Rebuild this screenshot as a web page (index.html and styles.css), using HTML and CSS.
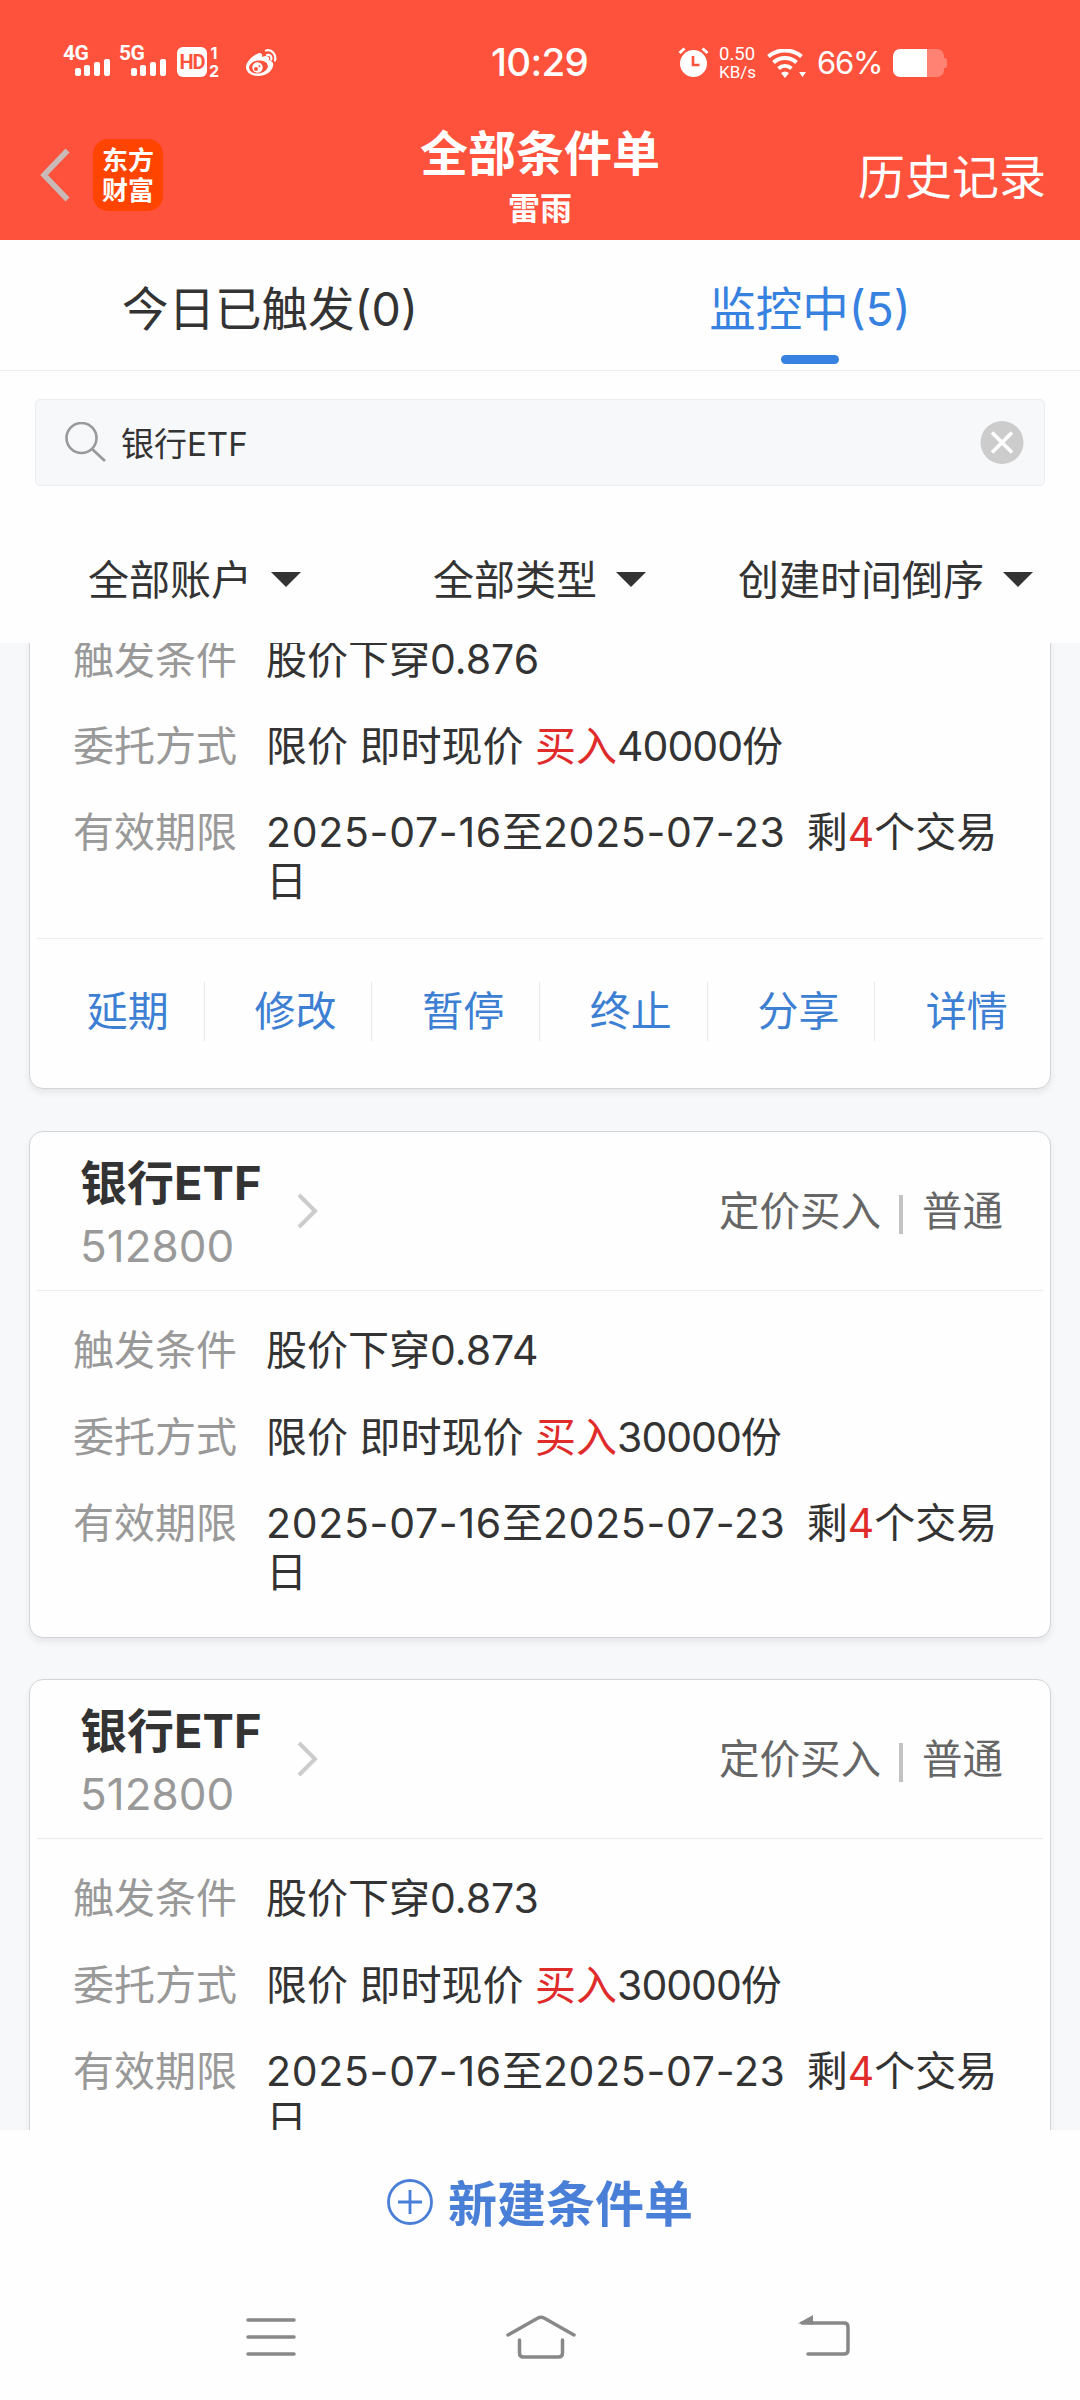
FILE: index.html
```html
<!DOCTYPE html>
<html lang="zh-CN">
<head>
    <meta charset="UTF-8">
    <meta name="viewport" content="width=device-width, initial-scale=1.0">
    <title>全部条件单</title>
    <link rel="stylesheet" href="styles.css">
</head>
<body>

<div class="page">
    <header class="header">
        <div class="status">
            <svg class="signal" width="48" height="42" viewBox="0 -8 48 42" fill="#fff">
                <text x="0" y="18" class="signal-text">4G</text>
                <rect x="12" y="26" width="6" height="8" rx="2"/>
                <rect x="21" y="23" width="6" height="11" rx="2"/>
                <rect x="31" y="20" width="6" height="14" rx="2"/>
                <rect x="41" y="17" width="6" height="17" rx="2"/>
            </svg>
            <svg class="signal" width="48" height="42" viewBox="0 -8 48 42" fill="#fff">
                <text x="0" y="18" class="signal-text">5G</text>
                <rect x="12" y="26" width="6" height="8" rx="2"/>
                <rect x="21" y="23" width="6" height="11" rx="2"/>
                <rect x="31" y="20" width="6" height="14" rx="2"/>
                <rect x="41" y="17" width="6" height="17" rx="2"/>
            </svg>
            <span class="hd">HD</span>
            <span class="sim"><span>1</span><span>2</span></span>
            <svg class="weibo" width="32" height="28" viewBox="0 0 32 28">
                <path d="M11 5c3-2 6-1 5 3 4-2 8-1 7 3 3 1 5 3 4 6-1 6-8 10-15 10C5 27 0 23 0 18 0 13 6 7 11 5z" fill="#fff"/>
                <ellipse cx="12.500" cy="18" rx="9.500" ry="6.500" fill="#ff523c" transform="rotate(-8 12.500 18)"/>
                <circle cx="11.500" cy="18.500" r="5.200" fill="#fff"/>
                <circle cx="10" cy="20" r="2" fill="#ff523c"/>
                <circle cx="13.500" cy="17.300" r="1" fill="#ff523c"/>
                <path d="M20 1.500c6-1.500 10.500 4 9 10M21 6c3-.8 5 1.500 4.200 4.500" fill="none" stroke="#fff" stroke-width="2.200" stroke-linecap="round"/>
            </svg>
            <span class="time">10:29</span>
            <svg class="alarm" width="32" height="30" viewBox="0 0 32 30">
                <circle cx="15.500" cy="16.500" r="13.500" fill="#fff"/>
                <path d="M1.500 6l5-4.500M29.500 6l-5-4.500" stroke="#fff" stroke-width="3"/>
                <path d="M15 9v9h6.500" fill="none" stroke="#ff523c" stroke-width="2.600"/>
            </svg>
            <span class="speed"><span>0.50</span><span>KB/s</span></span>
            <svg class="wifi" width="40" height="29" viewBox="0 0 40 29">
                <path d="M1.500 7.500C11-.5 25-.5 34.500 7.500M6.500 13.500c6.500-6 16.500-6 23 0M11.500 19.500c4-3.500 9-3.500 13 0" fill="none" stroke="#fff" stroke-width="4"/>
                <path d="M14 24q4-3 8 0l-4 5zM32 23h7l-3.500 5z" fill="#fff"/>
            </svg>
            <span class="percent">66%</span>
            <svg class="battery" width="54" height="28" viewBox="0 0 54 28">
                <path d="M34 0h10a7 7 0 0 1 7 7v2q3 0 3 2v6q0 2-3 2v2a7 7 0 0 1-7 7H34z" fill="#ff8272"/>
                <path d="M34 0H7a7 7 0 0 0-7 7v14a7 7 0 0 0 7 7h27z" fill="#fff"/>
            </svg>
        </div>
        <div class="navbar">
            <div class="nav-left">
                <svg width="30" height="54" viewBox="0 0 30 54">
                    <path d="M27.500 2.500L4 27l23.500 24.500" fill="none" stroke="#c9b9b7" stroke-width="5.500"/>
                </svg>
                <div class="logo"><span>东方</span><span>财富</span></div>
            </div>
            <div class="nav-title">
                <h1>全部条件单</h1>
                <p>雷雨</p>
            </div>
            <a class="history">历史记录</a>
        </div>
    </header>

    <nav class="tabs">
        <div class="tab"><span>今日已触发(0)</span></div>
        <div class="tab active"><span>监控中(5)</span></div>
    </nav>

    <div class="search">
        <svg width="42" height="42" viewBox="0 0 42 42">
            <circle cx="16.500" cy="16" r="15" fill="none" stroke="#999" stroke-width="2.600"/>
            <path d="M27 27l13 12" stroke="#999" stroke-width="2.800"/>
        </svg>
        <span class="keyword">银行ETF</span>
        <svg width="44" height="44" viewBox="0 0 44 44">
            <circle cx="22" cy="21.500" r="21.500" fill="#ccc"/>
            <path d="M12 11.500l20 20M32 11.500l-20 20" stroke="#fff" stroke-width="3.600"/>
        </svg>
    </div>

    <div class="filters">
        <div class="filter"><span>全部账户</span><i class="arrow"></i></div>
        <div class="filter"><span>全部类型</span><i class="arrow"></i></div>
        <div class="filter"><span>创建时间倒序</span><i class="arrow"></i></div>
    </div>

    <main class="list">
        <div class="card first">
            <div class="card-head">
                <div class="stock">
                    <h2>银行ETF</h2>
                    <p>512800</p>
                </div>
                <svg class="chevron" width="22" height="36" viewBox="0 0 22 36"><path d="M2 2l16 16L2 34" fill="none" stroke="#ccc" stroke-width="4"/></svg>
                <div class="kind"><span>定价买入</span><i></i><span>普通</span></div>
            </div>
            <div class="card-body">
                <div class="row"><label>触发条件</label><p>股价下穿0.876</p></div>
                <div class="row"><label>委托方式</label><p>限价 即时现价 <em>买入</em><span class="amount">40000</span>份</p></div>
                <div class="row"><label>有效期限</label><p class="period"><span class="date">2025-07-16</span>至<span class="date">2025-07-23</span>&nbsp; 剩<em>4</em>个交易日</p></div>
            </div>
            <div class="actions">
                <a>延期</a>
                <a>修改</a>
                <a>暂停</a>
                <a>终止</a>
                <a>分享</a>
                <a>详情</a>
            </div>
        </div>

        <div class="card">
            <div class="card-head">
                <div class="stock">
                    <h2>银行ETF</h2>
                    <p>512800</p>
                </div>
                <svg class="chevron" width="22" height="36" viewBox="0 0 22 36"><path d="M2 2l16 16L2 34" fill="none" stroke="#ccc" stroke-width="4"/></svg>
                <div class="kind"><span>定价买入</span><i></i><span>普通</span></div>
            </div>
            <div class="card-body">
                <div class="row"><label>触发条件</label><p>股价下穿0.874</p></div>
                <div class="row"><label>委托方式</label><p>限价 即时现价 <em>买入</em><span class="amount">30000</span>份</p></div>
                <div class="row"><label>有效期限</label><p class="period"><span class="date">2025-07-16</span>至<span class="date">2025-07-23</span>&nbsp; 剩<em>4</em>个交易日</p></div>
            </div>
        </div>

        <div class="card">
            <div class="card-head">
                <div class="stock">
                    <h2>银行ETF</h2>
                    <p>512800</p>
                </div>
                <svg class="chevron" width="22" height="36" viewBox="0 0 22 36"><path d="M2 2l16 16L2 34" fill="none" stroke="#ccc" stroke-width="4"/></svg>
                <div class="kind"><span>定价买入</span><i></i><span>普通</span></div>
            </div>
            <div class="card-body">
                <div class="row"><label>触发条件</label><p>股价下穿0.873</p></div>
                <div class="row"><label>委托方式</label><p>限价 即时现价 <em>买入</em><span class="amount">30000</span>份</p></div>
                <div class="row"><label>有效期限</label><p class="period"><span class="date">2025-07-16</span>至<span class="date">2025-07-23</span>&nbsp; 剩<em>4</em>个交易日</p></div>
            </div>
        </div>
    </main>

    <div class="create">
        <svg width="46" height="46" viewBox="0 0 46 46" fill="none" stroke="#4a7fd8" stroke-width="2.800">
            <circle cx="23" cy="23" r="21.500"/>
            <path d="M23 11v24M11 23h24"/>
        </svg>
        <span>新建条件单</span>
    </div>

    <footer class="sysnav">
        <svg width="50" height="44" viewBox="0 0 50 44" stroke="#888" stroke-width="3.500" stroke-linecap="round">
            <path d="M2 5h46M2 22h46M2 39h46"/>
        </svg>
        <svg width="70" height="44" viewBox="0 0 70 44" fill="none" stroke="#888" stroke-width="3.500" stroke-linecap="round" stroke-linejoin="round">
            <path d="M2 20L32 3q3-1.500 6 0l30 17M13.500 25v13q0 4 4 4h35q4 0 4-4V25"/>
        </svg>
        <svg width="52" height="44" viewBox="0 0 52 44" fill="none" stroke="#888" stroke-width="3.500" stroke-linecap="round">
            <path d="M4 8h42q4 0 4 4v23q0 4-4 4H10"/>
            <path d="M0 8.500L15 0v9.500z" fill="#888" stroke="none"/>
        </svg>
    </footer>
</div>

</body>
</html>
```
FILE: styles.css
```css
* {
    box-sizing: border-box;
}
body {
    margin: 0;
    font-family: Inter, 'Noto Sans CJK SC', sans-serif;
    color: #333;
    background: #fff;
}
h1, h2, p {
    margin: 0;
}
svg {
    display: block;
    flex: none;
}
em {
    font-style: normal;
    color: #e02b2b;
}
.page {
    width: 1080px;
    height: 2400px;
    display: flex;
    flex-direction: column;
    overflow: hidden;
    background: #fefefe;
}

/* 顶部 */
.header {
    height: 240px;
    flex: none;
    background: #ff523c;
    color: #fff;
}
.status {
    height: 114px;
    display: flex;
    align-items: flex-start;
    padding: 34px 0 0 63px;
}
.signal {
    margin-right: 8px;
}
.signal-text {
    font-family: Roboto, sans-serif;
    font-size: 21px;
    font-weight: 700;
    letter-spacing: -0.5px;
}
.hd {
    width: 30px;
    height: 30px;
    margin-top: 13px;
    margin-left: 2px;
    border-radius: 6px;
    background: #fff;
    color: #ff523c;
    font-family: Roboto, sans-serif;
    font-size: 20px;
    font-weight: 700;
    line-height: 30px;
    letter-spacing: -1px;
    text-align: center;
}
.sim {
    width: 12px;
    margin: 10px 0 0 1px;
    display: flex;
    flex-direction: column;
    font-size: 16px;
    font-weight: 700;
    line-height: 18px;
    text-align: center;
}
.weibo {
    margin: 15px 0 0 26px;
}
.time {
    width: 100px;
    margin: 4px 0 0 213px;
    font-size: 38.5px;
    font-weight: 500;
    line-height: 48px;
    letter-spacing: -0.7px;
    white-space: nowrap;
}
.alarm {
    margin: 13px 0 0 87px;
}
.speed {
    width: 38px;
    margin: 11px 0 0 9px;
    display: flex;
    flex-direction: column;
    font-family: Roboto, sans-serif;
    font-size: 18.5px;
    line-height: 18px;
}
.speed span + span {
    font-size: 17px;
}
.wifi {
    margin: 15px 0 0 10px;
}
.percent {
    width: 66px;
    margin: 8px 0 0 10px;
    font-size: 31px;
    line-height: 42px;
    letter-spacing: -1.2px;
}
.battery {
    margin: 15px 0 0 10px;
}
.navbar {
    height: 126px;
    display: grid;
    grid-template-columns: 1fr auto 1fr;
    padding: 0 34px 0 40px;
}
.nav-left {
    display: flex;
    align-items: center;
    gap: 23px;
    height: 121px;
}
.logo {
    width: 70px;
    height: 72px;
    border-radius: 15px;
    background: #ff4400;
    display: flex;
    flex-direction: column;
    justify-content: center;
    padding-bottom: 2px;
    font-family: 'Noto Sans CJK SC', sans-serif;
    font-size: 26px;
    font-weight: 700;
    line-height: 30px;
    text-align: center;
}
.nav-title {
    text-align: center;
    padding-top: 10px;
    margin-left: -6px;
}
.nav-title h1 {
    font-size: 48px;
    line-height: 60px;
    font-weight: 700;
}
.nav-title p {
    font-size: 32px;
    line-height: 49px;
    font-weight: 700;
}
.history {
    justify-self: end;
    font-size: 47px;
    line-height: 125px;
}

/* 标签页 */
.tabs {
    height: 131px;
    flex: none;
    display: flex;
    border-bottom: 1px solid #ebebeb;
}
.tab {
    flex: 1;
    display: flex;
    flex-direction: column;
    align-items: center;
    font-size: 46.5px;
    line-height: 118px;
    padding-top: 10px;
}
.tab span {
    height: 105px;
}
.tab.active {
    color: #3781e0;
}
.tab.active::after {
    content: "";
    width: 58px;
    height: 9px;
    border-radius: 5px;
    background: #3781e0;
}

/* 搜索 */
.search {
    height: 87px;
    flex: none;
    margin: 28px 35px 0;
    padding: 0 20px 0 29px;
    display: flex;
    align-items: center;
    background: #f7f8fa;
    border: 1px solid #ebedf0;
    border-radius: 5px;
}
.keyword {
    flex: 1;
    margin: 0 0 2px 14px;
    font-size: 33px;
}
.filters {
    height: 157px;
    flex: none;
    display: grid;
    grid-template-columns: 345px 305px 430px;
    padding-top: 31px;
}
.filter {
    display: flex;
    align-items: center;
    padding-left: 88px;
    font-size: 41px;
    line-height: 50px;
}
.filter span {
    margin-bottom: 1px;
}
.arrow {
    border: 15px solid transparent;
    border-top-color: #333;
    border-bottom: none;
    margin: 0 0 1px 19px;
}

/* 条件单列表 */
.list {
    height: 1487px;
    flex: none;
    overflow: hidden;
    background: #f7f8fa;
}
.card {
    margin: 0 29px 41px;
    padding: 0 7px;
    background: #fefefe;
    border: 1px solid #d2d4d7;
    border-radius: 14px;
    box-shadow: 0 4px 6px rgba(0, 0, 0, 0.07);
}
/* 列表已向上滚动 */
.card.first {
    margin: -203px 29px 42px;
}
.card-head {
    height: 159px;
    display: flex;
    align-items: center;
    padding: 0 40px 0 43px;
    border-bottom: 1px solid #ebebeb;
}
.stock {
    width: 217px;
    padding-top: 5px;
}
.stock h2 {
    font-size: 47px;
    line-height: 64px;
    font-weight: 700;
    white-space: nowrap;
}
.stock p {
    font-size: 44px;
    line-height: 62px;
    color: #999;
}
.kind {
    margin-left: auto;
    display: flex;
    align-items: center;
    font-size: 40.5px;
    line-height: 50px;
    color: #666;
}
.kind span {
    margin-top: 1px;
}
.kind i {
    width: 4px;
    height: 39px;
    margin: 7px 19px 0 18px;
    background: #c2c2c2;
}
.card-body {
    padding: 35px 0 40px 36px;
    font-size: 41px;
    line-height: 49px;
}
.row {
    display: flex;
    margin-bottom: 37.5px;
}
.row:last-child {
    margin-bottom: 0;
}
.row label {
    width: 193px;
    color: #999;
}
.row p {
    width: 752px;
}
.amount {
    letter-spacing: -1px;
}
.period {
    word-spacing: -1px;
}
.date {
    letter-spacing: 0.7px;
}
.first .card-body {
    padding-bottom: 32px;
}
.actions {
    height: 150px;
    display: grid;
    grid-template-columns: repeat(6, 1fr);
    border-top: 1px solid #ebebeb;
    padding: 43px 0 50px;
}
.actions a {
    padding-left: 15px;
    text-align: center;
    font-size: 41px;
    line-height: 59px;
    color: #3d7fd3;
    border-right: 1px solid #e8e8e8;
}
.actions a:last-child {
    border-right: none;
}

/* 底部 */
.create {
    height: 144px;
    flex: none;
    display: flex;
    align-items: center;
    justify-content: center;
    gap: 15px;
    color: #4a7fd8;
    font-size: 49px;
    font-weight: 700;
}
.create span {
    margin-bottom: 4px;
}
.sysnav {
    display: grid;
    grid-template-columns: 260px 292px auto;
    padding: 41px 0 0 246px;
}
```
